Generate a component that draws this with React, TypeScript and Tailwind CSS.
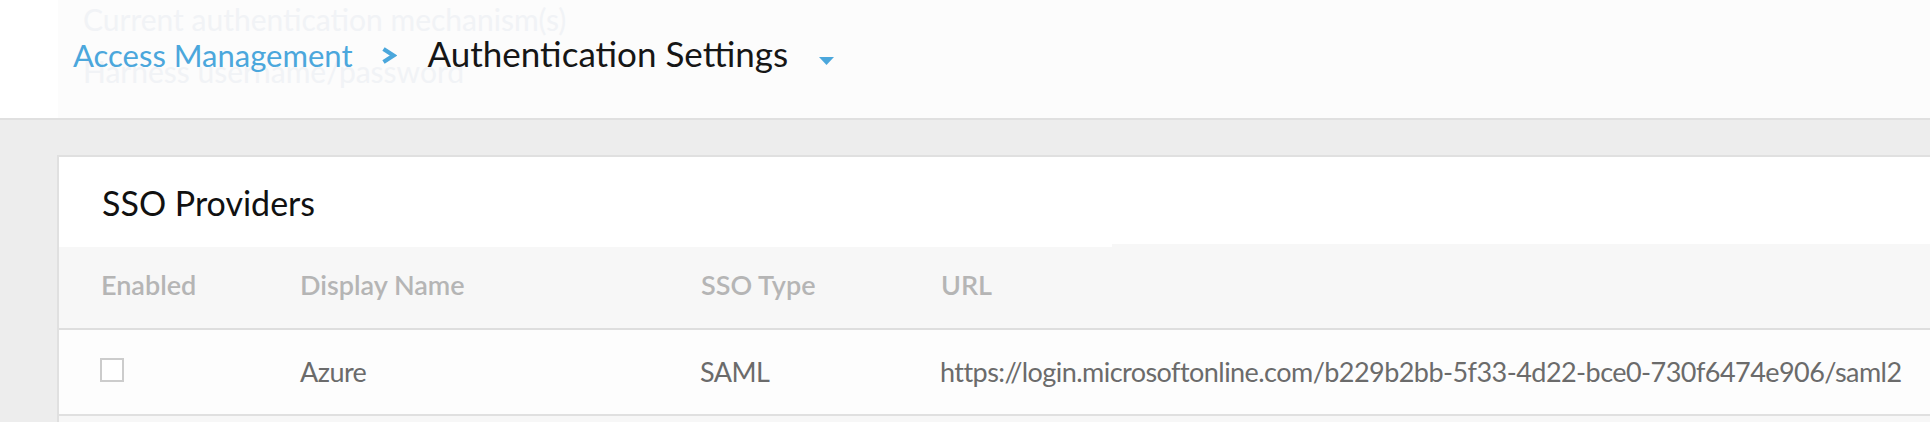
const font = { fontFamily: "Lato, 'Noto Sans', sans-serif" };

const columns = [
    { key: "enabled", label: "Enabled", width: "w-[199px] shrink-0" },
    { key: "name", label: "Display Name", width: "w-[401px] shrink-0" },
    { key: "type", label: "SSO Type", width: "w-[240px] shrink-0" },
    { key: "url", label: "URL", width: "flex-1 min-w-0" },
];

const providers = [
    {
        id: "azure",
        enabled: false,
        name: "Azure",
        type: "SAML",
        url: "https://login.microsoftonline.com/b229b2bb-5f33-4d22-bce0-730f6474e906/saml2",
    },
];

function Chevron() {
    return (
        <svg width="16" height="17" viewBox="0 0 16 17" className="block">
            <polyline
                points="2.5,2 12.5,8.5 2.5,15"
                fill="none"
                stroke="#4ba7dc"
                strokeWidth="4.2"
                strokeLinejoin="miter"
            />
        </svg>
    );
}

function Caret() {
    return (
        <svg width="15" height="8" viewBox="0 0 15 8" className="block">
            <polygon points="0,0 15,0 7.5,8" fill="#4ba7dc" />
        </svg>
    );
}

export default function App() {
    return (
        <div className="w-[1930px] h-[422px] overflow-hidden bg-[#ededed]" style={font}>
            {/* HEADER */}
            <header className="relative h-[120px] bg-white border-b-2 border-[#e0e0e0]">
                <div className="absolute left-[58px] top-0 right-0 bottom-0 bg-[#fcfcfc]" />
                {/* fading content underneath */}
                <div className="absolute left-[83px] top-[1px] text-[30px] leading-[36px] text-[#f1f3f6]">
                    <div>Current authentication mechanism(s)</div>
                    <div className="mt-[16px]">Harness username/password</div>
                </div>

                <div className="relative flex items-baseline pl-[73px] pt-[35px] leading-[36px]">
                    <span className="text-[31px] text-[#4ba7dc]">Access Management</span>
                    <span className="self-start ml-[28px] mr-[31px] mt-[12px]">
                        <Chevron />
                    </span>
                    <span className="text-[35px] text-[#161616]">Authentication Settings</span>
                    <span className="self-start ml-[31px] mt-[22px]">
                        <Caret />
                    </span>
                </div>
            </header>

            {/* CARD */}
            <div className="ml-[57px] mt-[35px] border-l-2 border-t-2 border-[#e0e0e0] bg-[#f7f7f7]">
                <div className="flex h-[90px]">
                    <div className="w-[1053px] h-[90px] bg-white pl-[43px] pt-[26px]">
                        <h2 className="text-[34px] leading-[40px] text-[#111111]">SSO Providers</h2>
                    </div>
                    <div className="flex-1 h-[87px] bg-white" />
                </div>

                {/* TABLE HEAD */}
                <div className="flex h-[83px] pl-[42px] bg-[#f7f7f7] border-b-2 border-[#dedede]">
                    {columns.map((col) => (
                        <div
                            key={col.key}
                            className={`${col.width} pt-[22px] text-[27px] leading-[32px] font-semibold text-[#b5b5b5]`}
                        >
                            {col.label}
                        </div>
                    ))}
                </div>

                {/* ROWS */}
                {providers.map((p) => (
                    <div
                        key={p.id}
                        className="flex items-center h-[86px] pl-[41px] bg-[#fdfdfd] border-b-2 border-[#e0e0e0] text-[27px] leading-[34px] tracking-[-0.55px] text-[#6b6b6b]"
                    >
                        <div className="w-[199px] shrink-0 flex items-center">
                            <span className="block w-[24px] h-[24px] border-2 border-[#cccccc] bg-white mt-[-4px]" />
                        </div>
                        <div className="w-[401px] shrink-0 pl-[1px]">{p.name}</div>
                        <div className="w-[240px] shrink-0">{p.type}</div>
                        <div className="flex-1 min-w-0 whitespace-nowrap">{p.url}</div>
                    </div>
                ))}
                <div className="h-[20px] bg-[#f7f7f7]" />
            </div>
        </div>
    );
}
